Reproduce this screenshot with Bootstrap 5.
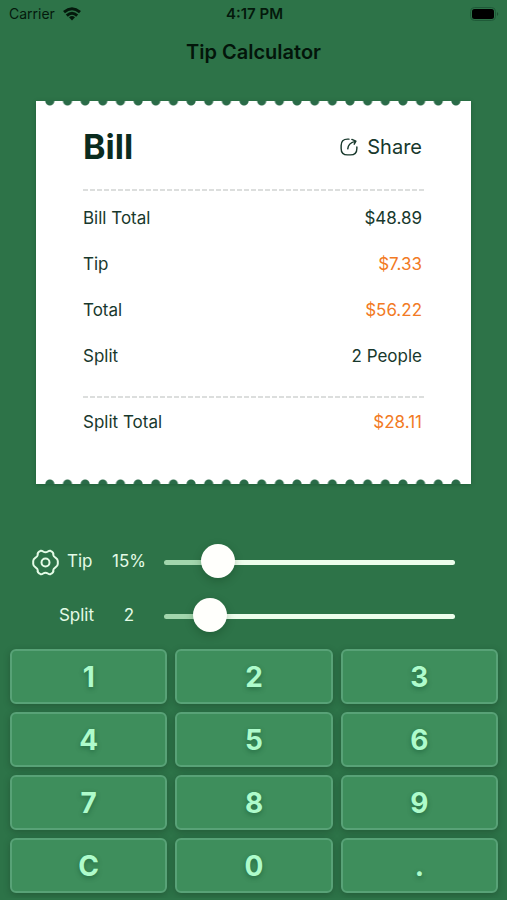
<!DOCTYPE html>
<html lang="en">
<head>
<meta charset="utf-8">
<meta name="viewport" content="width=device-width, initial-scale=1">
<title>Tip Calculator</title>
<link href="https://cdn.jsdelivr.net/npm/bootstrap@5.3.0/dist/css/bootstrap.min.css" rel="stylesheet">
<style>
:root{--felt:#2d7348;--ink:#18382c;--mint:#e4fbe6}
body{background:var(--felt);font-family:Inter,"Liberation Sans",sans-serif;color:#000}
.status{height:28px;padding:0 7px 0 9px;font-size:14px;line-height:28px;color:#04190c}
.side{flex:1 1 0}
.clock{font-size:15px;font-weight:600}
.title{font-size:20px;line-height:28px;font-weight:600;color:#03150a;margin:10px 0 35px}
.receipt{margin:0 36px;background:#fff;color:var(--ink);box-shadow:0 1px 4px rgba(10,60,30,.35)}
.edge{height:5px;margin:0 6px 0 5px;background:radial-gradient(circle at 50% 0,#2a6b48 4px,transparent 5px) 0 0/18px 5px round}
.edge.foot{background-image:radial-gradient(circle at 50% 100%,#2a6b48 4px,transparent 5px)}
.slip{padding:17px 49px 44px 47px}
.bill{font-size:34px;line-height:48px;font-weight:700;color:#0a2b1e}
.share{font-size:20px;line-height:48px;color:var(--ink);gap:9px}
.cut{height:2px;margin-right:-3px;background:repeating-linear-gradient(90deg,#dcdedd 0 5px,transparent 5px 7px)}
.cut.head{margin-top:18px}
.line{font-size:17px;line-height:26px}
.lines{padding:14px 0 27px;gap:20px}
.sum{padding-top:11px}
.orange{color:#f27a24}
.controls{padding:51px 52px 0 32px;color:var(--mint);font-size:17px}
.control{height:54px}
.gear{width:27px;height:27px;color:var(--mint)}
.name{width:62px}
.amount{width:70px;text-align:center}
.slide{-webkit-appearance:none;appearance:none;height:34px;background:none;min-width:0;margin:0;flex:1 1 0}
.slide::-webkit-slider-runnable-track{height:5px;border-radius:3px;background:linear-gradient(90deg,#a2d6ad var(--fill),#edfdec var(--fill))}
.slide::-webkit-slider-thumb{-webkit-appearance:none;width:34px;height:34px;margin-top:-16px;border-radius:50%;background:#fffffc;border:0;box-shadow:0 3px 8px rgba(0,40,10,.25)}
.slide::-moz-range-track{height:5px;border-radius:3px;background:#edfdec}
.slide::-moz-range-thumb{width:34px;height:34px;border:0;background:#fffffc}
.pad{display:grid;grid-template-columns:repeat(3,1fr);gap:8px;padding:6px 9px 5px 10px}
.key{height:55px;border:2px solid #58a277;border-radius:6px;background:#3e8e5c;color:#aefbcb;font-size:28px;line-height:48px;font-weight:700;padding:0;box-shadow:0 2px 6px rgba(20,50,30,.35);text-shadow:0 2px 5px rgba(10,70,40,.45)}
</style>
</head>
<body>
<header>
  <div class="status d-flex align-items-center">
    <div class="side d-flex align-items-center gap-2"><span>Carrier</span>
      <svg width="18" height="14" viewBox="0 0 18 14" fill="none" stroke="currentColor" stroke-width="3" aria-hidden="true"><path d="M1 5.100Q9-1.500 17 5.100M3.800 8.600Q9 3.800 14.200 8.600"/><path d="M9 13.500 6 10.300Q9 7.800 12 10.300Z" fill="currentColor" stroke="none"/></svg>
    </div>
    <span class="clock">4:17 PM</span>
    <div class="side d-flex justify-content-end">
      <svg width="30" height="14" viewBox="0 0 30 14" aria-hidden="true"><rect x=".5" y=".5" width="25" height="13" rx="4" fill="none" stroke="#1f5a38"/><rect x="2" y="2" width="22" height="10" rx="2.5"/><path d="M27 5q2.500 2 0 4z" fill="#1f5133"/></svg>
    </div>
  </div>
  <h1 class="title text-center">Tip Calculator</h1>
</header>
<main>
  <section class="receipt" aria-label="Bill">
    <div class="edge"></div>
    <div class="slip">
      <div class="d-flex justify-content-between align-items-center">
        <h2 class="bill m-0">Bill</h2>
        <button type="button" class="share btn p-0 border-0 d-flex align-items-center">
          <svg width="18" height="18" viewBox="0 0 19 19" fill="none" stroke="currentColor" stroke-width="1.5" stroke-linecap="round" stroke-linejoin="round" aria-hidden="true"><path d="M9.500 1.200H8Q1.200 1.200 1.200 8v3Q1.200 17.800 8 17.800h3Q17.800 17.800 17.800 11V9.500M8.200 11.500Q8.500 5.500 16 3.500M12.500 1.500 16.800 3.400 15 6.500"/></svg>
          Share</button>
      </div>
      <div class="cut head"></div>
      <div class="lines d-flex flex-column">
        <div class="line d-flex justify-content-between"><span>Bill Total</span><span>$48.89</span></div>
        <div class="line d-flex justify-content-between"><span>Tip</span><span class="orange">$7.33</span></div>
        <div class="line d-flex justify-content-between"><span>Total</span><span class="orange">$56.22</span></div>
        <div class="line d-flex justify-content-between"><span>Split</span><span>2 People</span></div>
      </div>
      <div class="cut"></div>
      <div class="line sum d-flex justify-content-between"><span>Split Total</span><span class="orange">$28.11</span></div>
    </div>
    <div class="edge foot"></div>
  </section>
  <section class="controls" aria-label="Settings">
    <div class="control d-flex align-items-center">
      <div class="name d-flex align-items-center gap-2">
        <button type="button" class="btn p-0 border-0 gear d-flex flex-shrink-0" aria-label="Tip settings"><svg width="27" height="27" viewBox="0 0 27 27" fill="none" stroke="currentColor" stroke-width="2" stroke-linejoin="round" aria-hidden="true"><circle cx="13.500" cy="13.500" r="4"/><path d="M13.500 3.300C16 3.300 16 1.300 18.500 1.800Q22 3.300 21.300 6C21.500 9 25.800 8.500 25.800 12V15C25.800 18.500 21.500 18 21.300 21Q22 23.700 18.500 25.200C16 25.700 16 23.700 13.500 23.700S11 25.700 8.500 25.200Q5 23.700 5.700 21C5.500 18 1.200 18.500 1.200 15V12C1.200 8.500 5.500 9 5.700 6Q5 3.300 8.500 1.800C11 1.300 11 3.300 13.500 3.300Z"/></svg></button>
        <label for="tip">Tip</label></div>
      <output class="amount p-0" for="tip">15%</output>
      <input class="slide" id="tip" type="range" min="0" max="105" value="15" style="--fill:18%">
    </div>
    <div class="control d-flex align-items-center">
      <label class="name text-end" for="split">Split</label>
      <output class="amount p-0" for="split">2</output>
      <input class="slide" id="split" type="range" min="1" max="10" value="2" style="--fill:15%">
    </div>
  </section>
  <section class="pad" aria-label="Keypad">
    <button class="key" type="button">1</button><button class="key" type="button">2</button><button class="key" type="button">3</button>
    <button class="key" type="button">4</button><button class="key" type="button">5</button><button class="key" type="button">6</button>
    <button class="key" type="button">7</button><button class="key" type="button">8</button><button class="key" type="button">9</button>
    <button class="key" type="button">C</button><button class="key" type="button">0</button><button class="key" type="button">.</button>
  </section>
</main>
<script src="https://cdn.jsdelivr.net/npm/bootstrap@5.3.0/dist/js/bootstrap.bundle.min.js"></script>
</body>
</html>
